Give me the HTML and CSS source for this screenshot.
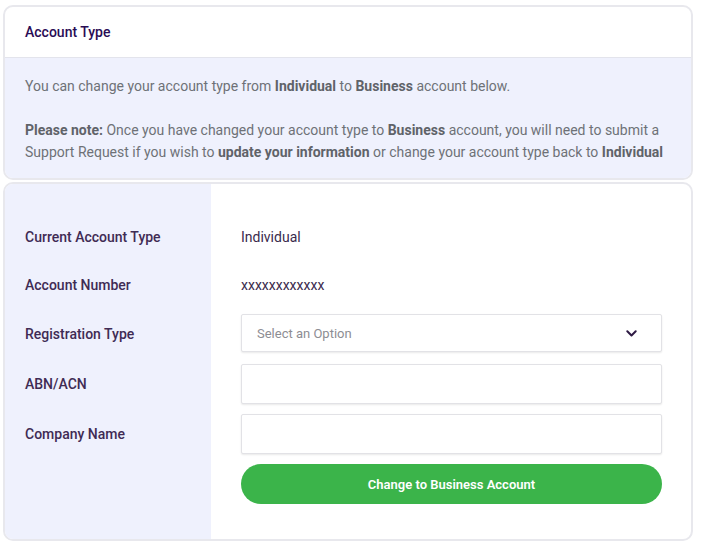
FILE: index.html
```html
<!DOCTYPE html>
<html lang="en">
<head>
<meta charset="utf-8">
<title>Account Type</title>
<link rel="stylesheet" href="styles.css">
</head>
<body>
<div class="page">
  <section class="card info-card">
    <header class="card-header">Account Type</header>
    <div class="info-body">
      <p>You can change your account type from <b>Individual</b> to <b>Business</b> account below.</p>
      <p><b>Please note:</b> Once you have changed your account type to <b>Business</b> account, you will need to submit a Support Request if you wish to <b>update your information</b> or change your account type back to <b>Individual</b></p>
    </div>
  </section>
  <section class="card form-card">
    <div class="labels">
      <div class="label">Current Account Type</div>
      <div class="label">Account Number</div>
      <div class="label">Registration Type</div>
      <div class="label">ABN/ACN</div>
      <div class="label">Company Name</div>
    </div>
    <div class="fields">
      <div class="value">Individual</div>
      <div class="value">xxxxxxxxxxxx</div>
      <div class="select">
        <span class="placeholder">Select an Option</span>
        <svg class="chev" width="11" height="7" viewBox="0 0 11 7"><path d="M1.3 1.3 L5.5 5.5 L9.7 1.3" fill="none" stroke="#2e1a44" stroke-width="2" stroke-linecap="round" stroke-linejoin="round"/></svg>
      </div>
      <div class="input"></div>
      <div class="input"></div>
      <button class="btn">Change to Business Account</button>
    </div>
  </section>
</div>
</body>
</html>
```
FILE: styles.css
```css
* { box-sizing: border-box; }
html, body { margin: 0; padding: 0; background: #ffffff; }
body { font-family: Roboto, "Liberation Sans", Arial, sans-serif; font-size: 14px; }
.page { width: 690px; margin: 5px 0 0 3px; display: flex; flex-direction: column; gap: 2px; }
.card { border: 2px solid #e8e8ed; border-radius: 10px; overflow: hidden; background: #fff; }
.card-header { height: 51px; display: flex; align-items: center; padding: 0 20px; font-size: 14px; font-weight: 500; color: #2a0c55; border-bottom: 1px solid #e3e4ec; }
.info-body { background: #eff1fd; padding: 17px 20px 15px; color: #6e7177; line-height: 22px; }
.info-body p { margin: 0; }
.info-body p + p { margin-top: 22px; }
.info-body b { font-weight: 700; color: #5f6369; }
.form-card { display: flex; }
.labels, .fields { display: grid; grid-template-rows: 38px 38px 40px 40px 40px 40px; row-gap: 10px; padding: 34px 0 35px; align-items: center; }
.labels { width: 206px; background: #eff1fd; padding-left: 20px; grid-template-rows: 38px 38px 40px 40px 40px; align-content: start; }
.fields { flex: 1; padding-left: 30px; padding-right: 29px; }
.label { font-weight: 500; color: #3f2b54; }
.value { color: #3a2a4c; }
.select, .input { height: 38px; border: 1px solid #e2e2e6; border-radius: 2px; background: #fff; box-shadow: 0 1px 2px rgba(0,0,0,0.09); }
.input { height: 40px; }
.select { display: flex; align-items: center; justify-content: space-between; padding: 0 24px 0 15px; align-self: start; }
.placeholder { font-size: 13px; color: #8d8d93; }
.btn { height: 40px; border: none; border-radius: 20px; background: #3bb44a; color: #fff; font-family: inherit; font-size: 13px; font-weight: 600; cursor: pointer; }
```
